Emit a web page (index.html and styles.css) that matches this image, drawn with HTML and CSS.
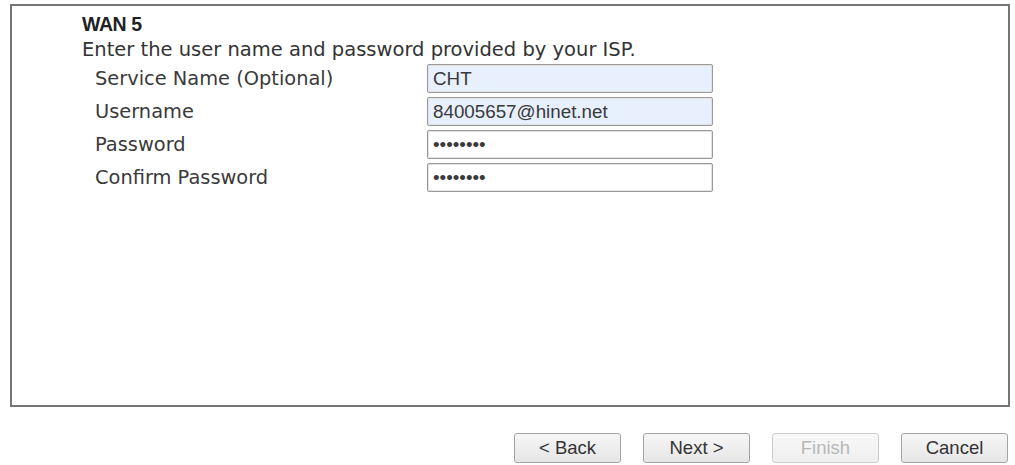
FILE: index.html
```html
<!DOCTYPE html>
<html>
<head>
<meta charset="utf-8">
<link rel="stylesheet" href="styles.css">
</head>
<body>
<div class="panel">
  <div class="title">WAN 5</div>
  <div class="intro">Enter the user name and password provided by your ISP.</div>
  <div class="form">
    <label class="label">Service Name (Optional)</label>
    <input class="field filled" type="text" value="CHT">
    <label class="label">Username</label>
    <input class="field filled" type="text" value="84005657@hinet.net">
    <label class="label">Password</label>
    <input class="field" type="password" value="abcdefgh">
    <label class="label">Confirm Password</label>
    <input class="field" type="password" value="abcdefgh">
  </div>
</div>
<div class="actions">
  <button class="btn">&lt; Back</button>
  <button class="btn">Next &gt;</button>
  <button class="btn" disabled>Finish</button>
  <button class="btn">Cancel</button>
</div>
</body>
</html>
```
FILE: styles.css
```css
html, body {
  margin: 0;
  padding: 0;
  background: #ffffff;
}
body {
  font-family: "DejaVu Sans", Verdana, sans-serif;
  color: #333333;
  width: 1015px;
}
.panel {
  box-sizing: border-box;
  margin: 4px 5px 0 10px;
  height: 403px;
  border: 2px solid #767676;
  padding: 4px 0 0 70px;
}
.title {
  font-family: "Liberation Sans", Arial, sans-serif;
  font-weight: bold;
  font-size: 19.5px;
  letter-spacing: -0.4px;
  line-height: 28px;
  color: #222222;
}
.intro {
  font-size: 19.5px;
  line-height: 24px;
}
.form {
  display: grid;
  grid-template-columns: 332px 286px;
  grid-auto-rows: 33px;
  align-items: center;
  padding-left: 13px;
}
.label {
  font-size: 19.4px;
  line-height: 33px;
  color: #3a3a3a;
}
.field {
  box-sizing: border-box;
  height: 29px;
  width: 286px;
  margin: 0;
  padding: 0 5px;
  border: 1px solid #9a9a9a;
  border-radius: 2px;
  background: #ffffff;
  font-family: "Liberation Sans", Arial, sans-serif;
  font-size: 18.8px;
  color: #3a3a3a;
  box-shadow: inset 0 0 0 1px #e2e2e2;
}
.field.filled {
  background: #e8f0fe;
}
.actions {
  display: flex;
  justify-content: flex-end;
  gap: 22px;
  margin: 26px 7px 0 0;
}
.btn {
  box-sizing: border-box;
  width: 107px;
  height: 30px;
  margin: 0;
  padding: 0;
  border: 1px solid #a3a3a3;
  border-radius: 3px;
  background: linear-gradient(#f6f6f6, #e6e6e6);
  font-family: "Liberation Sans", Arial, sans-serif;
  font-size: 18.5px;
  color: #333333;
}
.btn:disabled {
  color: #b8b8b8;
  border-color: #cccccc;
  background: linear-gradient(#f8f8f8, #efefef);
}
```
